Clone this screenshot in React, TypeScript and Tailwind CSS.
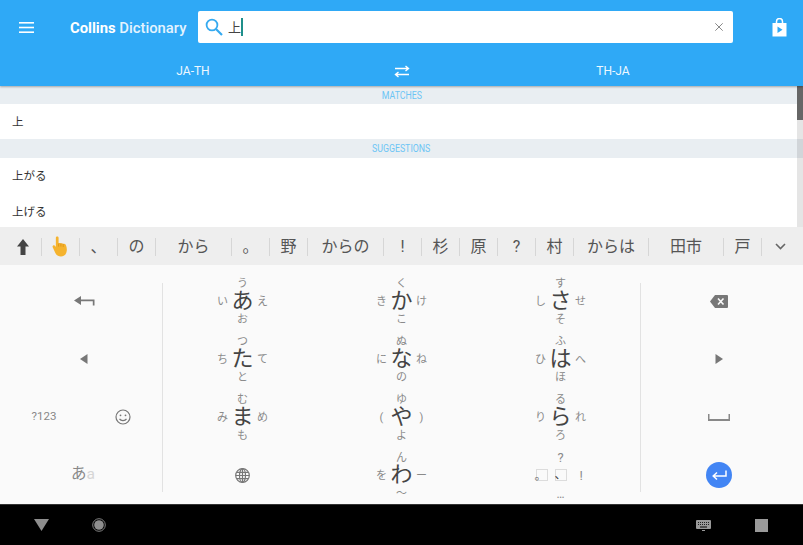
import React from "react";

const JP = "font-['Roboto','Noto_Sans_CJK_JP',sans-serif]";

type KeyProps = { c: string; t: string; l: string; r: string; b: string };

function FlickKey({ c, t, l, r, b }: KeyProps) {
  const side = "flex items-center justify-center text-[11px] leading-none text-[#8a8a8a]";
  return (
    <div className="flex items-center justify-center">
      <div className="grid grid-cols-[18px_22px_18px] grid-rows-[18px_18px_18px]">
        <span />
        <span className={side}>{t}</span>
        <span />
        <span className={side}>{l}</span>
        <span className="flex items-center justify-center text-[22px] leading-none text-[#444]">{c}</span>
        <span className={side}>{r}</span>
        <span />
        <span className={side}>{b}</span>
        <span />
      </div>
    </div>
  );
}

function PunctKey() {
  const side = "flex items-center justify-center leading-none text-[#8a8a8a]";
  const box = "relative w-[12px] h-[12px] border border-[#dcdcdc]";
  return (
    <div className="flex flex-col items-center h-[58px]">
      <span className={`${side} text-[13px] h-[22px]`}>?</span>
      <div className="flex items-center w-[50px] h-[12px] mt-[1px]">
        <div className={box}>
          <span className="absolute left-[-2px] bottom-[-2px] text-[12px] leading-none text-[#777]">。</span>
        </div>
        <div className={`${box} ml-[7px]`}>
          <span className="absolute left-[-1px] bottom-[-1px] text-[12px] leading-none text-[#444]">、</span>
        </div>
        <span className={`${side} text-[13px] ml-[13px]`}>!</span>
      </div>
      <span className={`${side} text-[12px] h-[23px] pt-[2px]`}>…</span>
    </div>
  );
}

function ToolItem({ w, children, last }: { w: string; children: React.ReactNode; last?: boolean }) {
  return (
    <div className={`${w} h-[18px] flex items-center justify-center ${last ? "" : "border-r border-[#d6d6d6]"}`}>
      {children}
    </div>
  );
}

function Cell({ children }: { children: React.ReactNode }) {
  return <div className="flex items-center justify-center text-[#777]">{children}</div>;
}

export default function App() {
  const words: [string, string][] = [
    ["、", "w-[38px]"],
    ["の", "w-[38px]"],
    ["から", "w-[76px]"],
    ["。", "w-[38px]"],
    ["野", "w-[38px]"],
    ["からの", "w-[76px]"],
    ["!", "w-[38px]"],
    ["杉", "w-[38px]"],
    ["原", "w-[38px]"],
    ["?", "w-[38px]"],
    ["村", "w-[38px]"],
    ["からは", "w-[75px]"],
    ["田市", "w-[75px]"],
    ["戸", "w-[38px]"],
  ];

  return (
    <div className={`w-[803px] h-[545px] overflow-hidden flex flex-col bg-white ${JP}`}>
      {/* App bar */}
      <header className="h-[86px] shrink-0 bg-[#2fa9f6] flex flex-col shadow-[0_1px_2px_rgba(0,0,0,0.3)] relative z-10">
        <div className="flex items-center pt-[11px] h-[43px]">
          <div className="w-[70px] flex pl-[19px]">
            <svg width="15" height="11" viewBox="0 0 15 11" fill="#fff">
              <rect y="0" width="15" height="1.6" />
              <rect y="4.7" width="15" height="1.6" />
              <rect y="9.4" width="15" height="1.6" />
            </svg>
          </div>
          <div className="w-[128px] pt-[2px] text-[14.8px] leading-none text-white whitespace-nowrap">
            <span className="font-bold">Collins</span> <span className="font-medium text-[#e3f3fe]">Dictionary</span>
          </div>
          <div className="w-[535px] h-[32px] bg-white rounded-[2px] flex items-center pl-[7px] pr-[10px]">
            <svg width="18" height="18" viewBox="0 0 18 18" fill="none" stroke="#35aaf0" strokeWidth="1.8" className="shrink-0">
              <circle cx="7" cy="7" r="5.4" />
              <path d="M11 11l6 6" strokeWidth="2.2" />
            </svg>
            <span className="ml-[5px] text-[13px] leading-none text-[#444]">上</span>
            <span className="w-[1.5px] h-[18px] bg-[#1f8f8a]" />
            <div className="flex-1" />
            <svg width="8" height="8" viewBox="0 0 8 8" stroke="#888" strokeWidth="1" className="shrink-0">
              <path d="M0.3 0.3l7.4 7.4M7.7 0.3l-7.4 7.4" />
            </svg>
          </div>
          <div className="pl-[39px] flex">
            <svg width="15" height="19" viewBox="0 0 15 19" fill="#fff">
              <path d="M0.5 5H14.5V18.5H0.5Z" />
              <path d="M4.5 6V3.5a3 3 0 0 1 6 0V6" fill="none" stroke="#fff" strokeWidth="1.5" />
              <path d="M5.5 8.5l5 3.2-5 3.2Z" fill="#2fa9f6" />
            </svg>
          </div>
        </div>
        <div className="flex-1 flex items-center text-[12px] leading-none text-[#eef8ff] pt-[13px]">
          <div className="w-[120px] ml-[133px] text-center">JA-TH</div>
          <div className="w-[30px] ml-[134px] flex justify-center">
            <svg width="16" height="13" viewBox="0 0 16 13" fill="none" stroke="#fff" strokeWidth="1.4">
              <path d="M1 3.5H14M11.5 1L14.5 3.5L11.5 6" />
              <path d="M15 9.5H2M4.5 7L1.5 9.5L4.5 12" />
            </svg>
          </div>
          <div className="w-[120px] ml-[136px] text-center">TH-JA</div>
        </div>
      </header>

      {/* Results */}
      <main className="h-[141px] shrink-0 overflow-hidden relative bg-white">
        <div className="h-[18px] pt-[1px] bg-[#e9eef2] flex items-center justify-center text-[10px] leading-none text-[#6cc5f5]">
          <span className="scale-x-[0.88]">MATCHES</span>
        </div>
        <div className="h-[35px] pt-[3px] flex items-center pl-[12px] text-[11.5px] leading-none text-[#333]">上</div>
        <div className="h-[19px] pt-[1px] bg-[#e9eef2] flex items-center justify-center text-[10px] leading-none text-[#6cc5f5]">
          <span className="scale-x-[0.88]">SUGGESTIONS</span>
        </div>
        <div className="h-[36px] pt-[2px] flex items-center pl-[12px] text-[11.5px] leading-none text-[#333]">上がる</div>
        <div className="h-[36px] pt-[2px] flex items-center pl-[12px] text-[11.5px] leading-none text-[#333]">上げる</div>
        <div className="absolute right-0 top-0 bottom-0 w-[6px] bg-black/10">
          <div className="h-[34px] bg-[#666]" />
        </div>
      </main>

      {/* Candidate bar */}
      <div className="h-[38px] shrink-0 bg-[#eeeeee] flex items-center pl-[4px] pt-[1px] text-[16px] leading-none text-[#555]">
        <ToolItem w="w-[38px]">
          <svg width="12" height="16" viewBox="0 0 12 16" fill="#444">
            <path d="M6 0L12 7.5H8.5V16H3.5V7.5H0Z" />
          </svg>
        </ToolItem>
        <ToolItem w="w-[38px]">
          <svg width="18" height="21" viewBox="0 0 17 20">
            <path
              d="M3.6 1.6c0-1.6 2.6-1.6 2.6 0v5.5c.5-.5 1.6-.6 2.2 0 .6-.4 1.7-.3 2.2.4.8-.4 2-.1 2.4.8.9 1.8 1.3 4 .9 6.200C13.500 17.500 11.500 19.500 8.500 19.500c-2.800 0-4.500-1.300-5.500-3.500L.6 10.800c-.6-1.500 1.200-2.600 2.200-1.400l.8 1Z"
              fill="#f5b32e"
            />
            <path d="M6.200 7.100v3M8.400 7.100v3M10.600 7.500v3" stroke="#d98f12" strokeWidth="0.7" fill="none" />
          </svg>
        </ToolItem>
        {words.map(([w, cls]) => (
          <ToolItem key={w} w={cls}>
            <span className="pt-[1px]">{w}</span>
          </ToolItem>
        ))}
        <ToolItem w="w-[36px]" last>
          <svg width="11" height="7" viewBox="0 0 11 7" fill="none" stroke="#666" strokeWidth="1.6">
            <path d="M1 1l4.500 4.500L10 1" />
          </svg>
        </ToolItem>
      </div>

      {/* Keyboard */}
      <div className="h-[239px] shrink-0 bg-[#fafafa] flex pt-[7px]">
        <div className="w-[162px] pl-[5px] grid grid-rows-[58px_58px_58px_58px]">
          <Cell>
            <svg width="21" height="10" viewBox="0 0 21 10" fill="#777">
              <path d="M0 4.500L7 0V3.500H20.500V9.500H18.800V5.300H7V9Z" />
            </svg>
          </Cell>
          <Cell>
            <svg width="8" height="10" viewBox="0 0 8 10" fill="#777">
              <path d="M7.500 0V10L0 5Z" />
            </svg>
          </Cell>
          <div className="grid grid-cols-[78px_80px]">
            <div className="flex items-center justify-center text-[11.5px] leading-none text-[#888]">?123</div>
            <Cell>
              <svg width="16" height="16" viewBox="0 0 16 16" fill="none" stroke="#777" strokeWidth="1.2">
                <circle cx="8" cy="8" r="7" />
                <circle cx="5.500" cy="6.300" r="0.900" fill="#777" stroke="none" />
                <circle cx="10.500" cy="6.300" r="0.900" fill="#777" stroke="none" />
                <path d="M4.500 9.800c1.500 2.300 5.500 2.300 7 0" />
              </svg>
            </Cell>
          </div>
          <div className="flex items-center justify-center pr-[2px] text-[15.5px] leading-none text-[#888]">
            あ<span className="text-[#d6d6d6]">a</span>
          </div>
        </div>
        <div className="w-px bg-[#e2e2e2] mt-[11px] mb-[12px]" />
        <div className="w-[477px] grid grid-cols-3 grid-rows-[58px_58px_58px_58px]">
          <FlickKey c="あ" t="う" l="い" r="え" b="お" />
          <FlickKey c="か" t="く" l="き" r="け" b="こ" />
          <FlickKey c="さ" t="す" l="し" r="せ" b="そ" />
          <FlickKey c="た" t="つ" l="ち" r="て" b="と" />
          <FlickKey c="な" t="ぬ" l="に" r="ね" b="の" />
          <FlickKey c="は" t="ふ" l="ひ" r="へ" b="ほ" />
          <FlickKey c="ま" t="む" l="み" r="め" b="も" />
          <FlickKey c="や" t="ゆ" l="(" r=")" b="よ" />
          <FlickKey c="ら" t="る" l="り" r="れ" b="ろ" />
          <Cell>
            <svg width="15" height="15" viewBox="0 0 15 15" fill="none" stroke="#777" strokeWidth="1.200">
              <circle cx="7.500" cy="7.500" r="6.800" />
              <ellipse cx="7.500" cy="7.500" rx="3" ry="6.800" />
              <path d="M7.500 0.700V14.300M0.700 7.500H14.300M1.600 4.300H13.400M1.600 10.700H13.400" />
            </svg>
          </Cell>
          <FlickKey c="わ" t="ん" l="を" r="ー" b="〜" />
          <PunctKey />
        </div>
        <div className="w-px bg-[#e2e2e2] mt-[11px] mb-[12px]" />
        <div className="w-[162px] pr-[6px] grid grid-rows-[58px_58px_58px_58px]">
          <Cell>
            <svg width="18" height="13" viewBox="0 0 18 13">
              <path d="M5 0H17a1 1 0 0 1 1 1V12a1 1 0 0 1-1 1H5L0 6.500Z" fill="#777" />
              <path d="M8 3.500l5.500 6M13.500 3.500l-5.500 6" stroke="#fafafa" strokeWidth="1.600" />
            </svg>
          </Cell>
          <Cell>
            <svg width="8" height="10" viewBox="0 0 8 10" fill="#777">
              <path d="M0.500 0V10L8 5Z" />
            </svg>
          </Cell>
          <Cell>
            <svg width="22" height="7" viewBox="0 0 22 7" fill="#888">
              <path d="M0 0H1.500V5H20.500V0H22V7H0Z" />
            </svg>
          </Cell>
          <Cell>
            <div className="w-[26px] h-[26px] rounded-full bg-[#4285f4] flex items-center justify-center">
              <svg width="15" height="11" viewBox="0 0 15 11" fill="none" stroke="#fff" strokeWidth="1.500">
                <path d="M14 0.500V6H1.500M5 2.500L1.200 6L5 9.500" />
              </svg>
            </div>
          </Cell>
        </div>
      </div>

      {/* Android nav */}
      <nav className="flex-1 bg-black border-t border-[#333] flex items-center">
        <svg width="15" height="12" viewBox="0 0 15 12" fill="#8e8e8e" className="ml-[34px]">
          <path d="M0 0H15L7.500 12Z" />
        </svg>
        <svg width="14" height="14" viewBox="0 0 14 14" className="ml-[43px]">
          <circle cx="7" cy="7" r="6.300" fill="none" stroke="#8e8e8e" strokeWidth="0.900" />
          <circle cx="7" cy="7" r="4.800" fill="#8e8e8e" />
        </svg>
        <svg width="15" height="11" viewBox="0 0 15 11" className="ml-[590px]">
          <rect width="15" height="9" rx="1" fill="#999" />
          <path d="M2 2.500h11M2 4.500h11" stroke="#000" strokeWidth="0.800" strokeDasharray="1 1" />
          <path d="M4 7h7" stroke="#000" strokeWidth="1" />
          <path d="M6 10.500h3" stroke="#999" strokeWidth="1" />
        </svg>
        <div className="w-[13px] h-[13px] bg-[#9a9a9a] ml-[44px]" />
      </nav>
    </div>
  );
}
